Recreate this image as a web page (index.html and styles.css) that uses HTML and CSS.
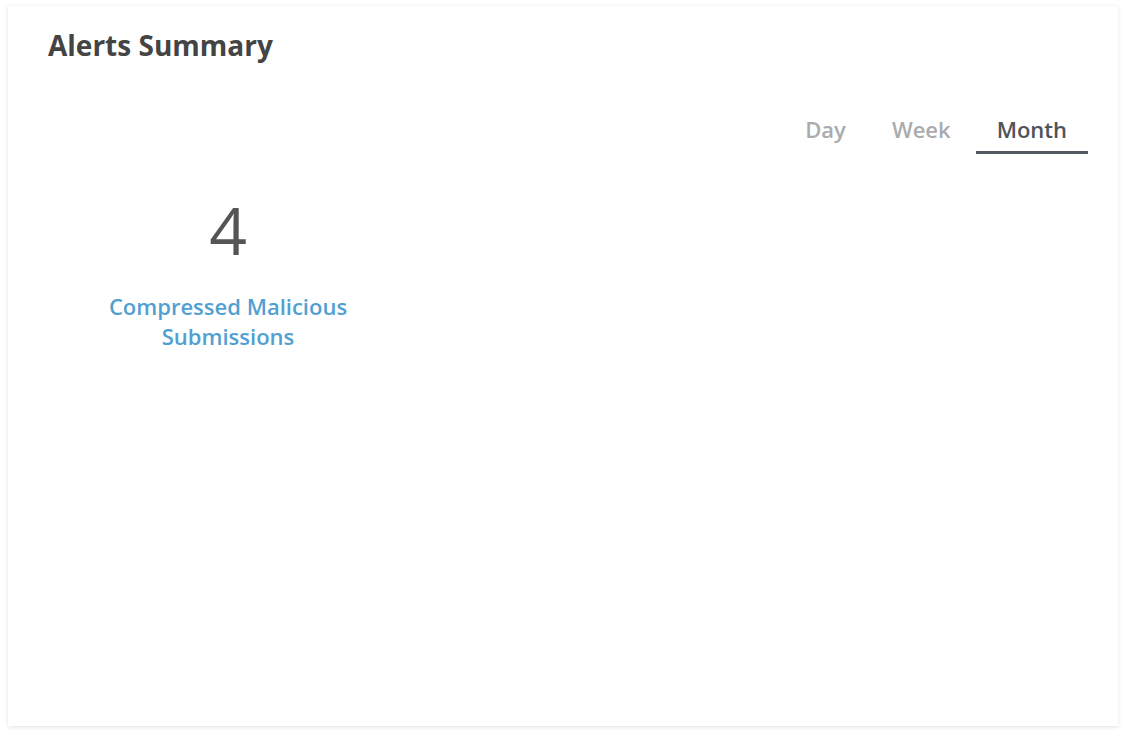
FILE: index.html
```html
<!DOCTYPE html>
<html>
<head>
<meta charset="utf-8">
<link rel="stylesheet" href="styles.css">
</head>
<body>
<div class="card">
  <h1 class="title">Alerts Summary</h1>
  <div class="tabs">
    <div class="tab">Day</div>
    <div class="tab">Week</div>
    <div class="tab active">Month</div>
  </div>
  <div class="stats">
    <div class="stat">
      <div class="value">4</div>
      <div class="label">Compressed Malicious Submissions</div>
    </div>
  </div>
</div>
</body>
</html>
```

FILE: styles.css
```css
html, body {
  margin: 0;
  background: #fff;
}
body {
  padding: 6px 16px 16px 8px;
  font-family: "Open Sans", "Liberation Sans", sans-serif;
}
.card {
  height: 720px;
  box-sizing: border-box;
  background: #fff;
  box-shadow: 0 1px 4px rgba(0, 0, 0, 0.12);
  padding: 20px 30px 0 40px;
}
.title {
  margin: 0;
  font-size: 28px;
  font-weight: 700;
  color: #444;
  line-height: 38px;
}
.tabs {
  display: flex;
  justify-content: flex-end;
  gap: 4px;
  margin-top: 50px;
}
.tab {
  padding: 0 21px 7px;
  font-size: 22px;
  font-weight: 600;
  color: #a9abae;
  line-height: 30px;
  border-bottom: 3px solid transparent;
}
.tab.active {
  color: #4f535b;
  border-bottom-color: #555a62;
}
.stats {
  display: flex;
  margin-top: 30px;
}
.stat {
  width: 360px;
  text-align: center;
}
.value {
  font-size: 66px;
  font-weight: 400;
  color: #555;
  line-height: 90px;
}
.label {
  margin-top: 17px;
  font-size: 22px;
  font-weight: 600;
  color: #529fd2;
  line-height: 30px;
  padding: 0 40px;
}
```
